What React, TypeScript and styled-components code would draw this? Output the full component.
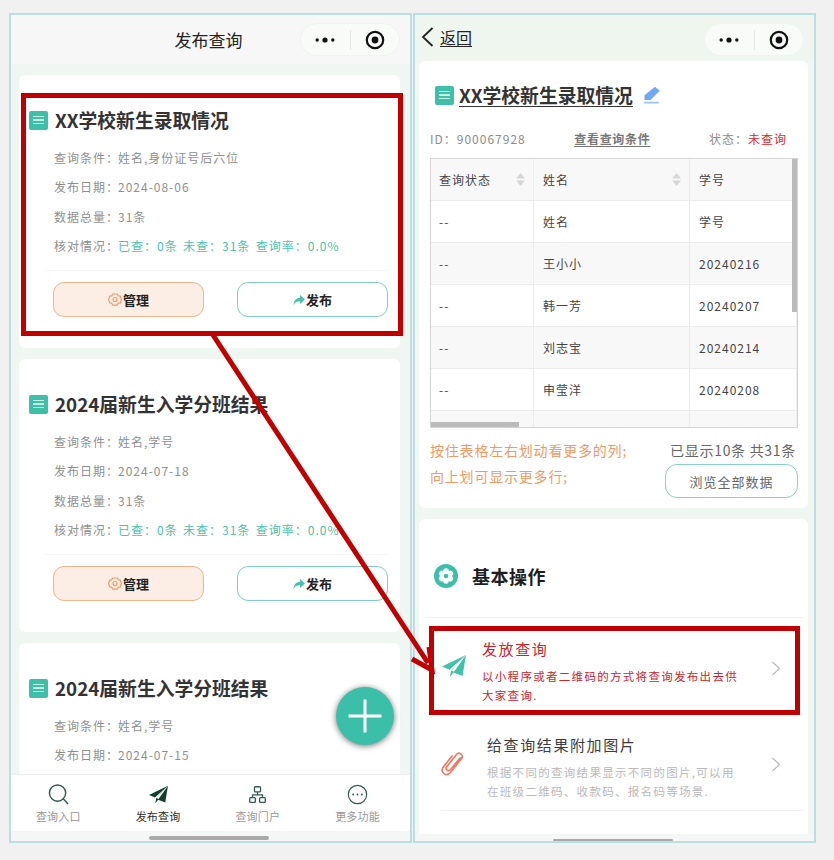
import React from "react";
import styled, { createGlobalStyle } from "styled-components";

const Global = createGlobalStyle`
  html, body { margin: 0; padding: 0; background: #f1f1f1; }
  * { box-sizing: border-box; }
  body { font-family: "Noto Sans CJK SC", "Noto Sans", sans-serif; }
`;

const Stage = styled.div`
  position: relative;
  width: 834px;
  height: 860px;
  overflow: hidden;
  display: flex;
  align-items: flex-start;
  gap: 1px;
  padding: 13px 0 0 9px;
`;

const Phone = styled.div`
  width: 403px;
  height: 830px;
  border: 2px solid #b9dfe3;
  background: #f0f6f1;
  display: flex;
  flex-direction: column;
  overflow: hidden;
`;

const NavBar = styled.div<{ $tint?: boolean }>`
  height: ${(p) => (p.$tint ? "44px" : "49px")};
  flex: none;
  display: flex;
  align-items: center;
  position: relative;
  padding: ${(p) => (p.$tint ? "0 0 0 6px" : "0")};
  background: ${(p) => (p.$tint ? "#eff6f0" : "#f6f7f6")};
`;

const NavTitle = styled.div`
  flex: 1;
  text-align: center;
  font-size: 17px;
  color: #222;
  padding-right: 4px;
`;

const Capsule = styled.div<{ $right: number; $top: number }>`
  position: absolute;
  right: ${(p) => p.$right}px;
  top: ${(p) => p.$top}px;
  width: 100px;
  height: 33px;
  border-radius: 17px;
  background: #f9fbf9;
  border: 1px solid #f1f3f1;
  display: flex;
  align-items: center;
`;

const CapsuleSide = styled.div`
  flex: 1;
  display: flex;
  align-items: center;
  justify-content: center;
`;

const CapsuleBar = styled.div`
  width: 1px;
  height: 20px;
  background: #e6e8e6;
`;

const Back = styled.a`
  display: flex;
  align-items: center;
  gap: 6px;
  font-size: 16px;
  color: #222;
  span { text-decoration: underline; text-underline-offset: 2px; }
`;

const ListBody = styled.div`
  flex: 1;
  min-height: 0;
  overflow: hidden;
  padding: 11px 10px 0 8px;
  display: flex;
  flex-direction: column;
  gap: 11px;
`;

const QueryCard = styled.div`
  flex: none;
  height: 273px;
  background: #fff;
  border-radius: 6px;
  padding: 31px 12px 0 10px;
`;

const TitleRow = styled.div`
  display: flex;
  align-items: center;
  gap: 7px;
  height: 28px;
`;

const DocBadge = styled.div`
  width: 19px;
  height: 19px;
  flex: none;
  border-radius: 2px;
  background: #3dbfa8;
  display: flex;
  flex-direction: column;
  align-items: center;
  justify-content: center;
  gap: 2px;
  i { display: block; width: 11px; height: 1.6px; background: #c8efe6; }
`;

const CardTitle = styled.div<{ $link?: boolean }>`
  font-size: 18.8px;
  line-height: 28px;
  font-weight: 700;
  color: #333;
  white-space: nowrap;
  text-decoration: ${(p) => (p.$link ? "underline" : "none")};
  text-underline-offset: 3px;
`;

const InfoList = styled.div`
  margin-top: 9px;
  padding-left: 25px;
`;

const InfoRow = styled.div`
  height: 29.3px;
  display: flex;
  align-items: center;
  font-size: 12px;
  letter-spacing: 1px;
  color: #8f8f8f;
  white-space: nowrap;
`;

const InfoLabel = styled.span`
  width: 64px;
  flex: none;
`;

const Green = styled.span`
  color: #4cc3aa;
  white-space: pre;
  word-spacing: -1px;
`;

const Rule = styled.div`
  height: 1px;
  background: #f4f5f4;
  margin: 10px 0 0 17px;
`;

const Actions = styled.div`
  display: flex;
  justify-content: space-between;
  margin-top: 11px;
  padding-left: 24px;
`;

const ActionButton = styled.div<{ $kind: "manage" | "publish" }>`
  width: 151px;
  height: 35px;
  border-radius: 11px;
  border: 1px solid ${(p) => (p.$kind === "manage" ? "#f0b48e" : "#7fd0c1")};
  background: ${(p) => (p.$kind === "manage" ? "#fdeee5" : "#fff")};
  display: flex;
  align-items: center;
  justify-content: center;
  font-size: 13px;
  font-weight: 700;
  color: #222;
  gap: 1px;
`;

const TabBar = styled.div`
  flex: none;
  height: 57px;
  background: #fff;
  border-top: 1px solid #eeeeee;
  display: grid;
  grid-template-columns: repeat(4, 1fr);
  margin-top: auto;
`;

const Tab = styled.div<{ $on?: boolean }>`
  display: flex;
  flex-direction: column;
  align-items: center;
  padding: 8px 5px 0 0;
  font-size: 11px;
  letter-spacing: 0.25px;
  line-height: 16px;
  color: ${(p) => (p.$on ? "#2b2b2b" : "#989898")};
`;

const TabIcon = styled.div`
  height: 22px;
  margin-bottom: 3px;
  display: flex;
  align-items: center;
  justify-content: center;
  svg { display: block; }
`;

const HomeStrip = styled.div<{ $h: number; $shift: number }>`
  flex: none;
  height: ${(p) => p.$h}px;
  padding-right: ${(p) => p.$shift}px;
  background: #f5f6f6;
  display: flex;
  justify-content: center;
  align-items: flex-end;
`;

const HomeBar = styled.div<{ $h: number; $mb: number }>`
  width: 120px;
  height: ${(p) => p.$h}px;
  margin-bottom: ${(p) => p.$mb}px;
  border-radius: 2px;
  background: #a9a9a9;
`;

const Fab = styled.div`
  position: absolute;
  left: 336px;
  top: 687px;
  width: 58px;
  height: 58px;
  border-radius: 50%;
  background: #3bbfa9;
  box-shadow: 0 1px 6px rgba(0, 0, 0, 0.55);
  display: flex;
  align-items: center;
  justify-content: center;
`;

const DetailBody = styled.div`
  flex: 1;
  min-height: 0;
  padding: 2px 6px 0 4px;
  display: flex;
  flex-direction: column;
  gap: 11px;
  overflow: hidden;
`;

const Panel = styled.div<{ $grow?: boolean }>`
  background: #fff;
  border-radius: 6px;
  ${(p) => (p.$grow ? "flex: 1; min-height: 0; border-radius: 6px 6px 0 0;" : "flex: none;")}
`;

const DataPanel = styled(Panel)`
  height: 447px;
  padding: 20px 10px 0 11px;
`;

const DetailTitle = styled.div`
  display: flex;
  align-items: center;
  gap: 5px;
  padding-left: 5px;
  height: 28px;
`;

const Meta = styled.div`
  display: flex;
  justify-content: space-between;
  align-items: center;
  margin-top: 19px;
  height: 20px;
  font-size: 12px;
  letter-spacing: 1px;
  color: #8c8c8c;
  padding-right: 11px;
`;

const MetaLink = styled.span`
  font-weight: 700;
  letter-spacing: 0.7px;
  color: #777;
  text-decoration: underline;
  text-underline-offset: 2px;
  margin-right: 10px;
`;

const Red = styled.span`
  color: #e02b2b;
`;

const TableBox = styled.div`
  position: relative;
  margin-top: 10px;
  height: 270px;
  width: 368px;
  border: 1px solid #d4d4d4;
  overflow: hidden;
`;

const TRow = styled.div<{ $alt?: boolean; $h?: number }>`
  display: grid;
  grid-template-columns: 103px 156px 107px;
  height: ${(p) => p.$h ?? 42}px;
  background: ${(p) => (p.$alt ? "#f8f8f8" : "#fff")};
  border-bottom: 1px solid #ececec;
`;

const TCell = styled.div`
  display: flex;
  align-items: center;
  justify-content: space-between;
  padding: 0 8px;
  font-size: 12px;
  letter-spacing: 1px;
  color: #444;
  border-right: 1px solid #ececec;
  & + & { padding-left: 9px; }
`;

const VScroll = styled.div`
  position: absolute;
  right: 0;
  top: 0;
  width: 5px;
  height: 153px;
  background: #bbbbbb;
`;

const HScroll = styled.div`
  position: absolute;
  left: 0;
  bottom: 0;
  width: 88px;
  height: 5px;
  background: #bbbbbb;
`;

const Foot = styled.div`
  display: flex;
  justify-content: space-between;
  width: 368px;
  padding-top: 9px;
`;

const Hints = styled.div`
  font-size: 14px;
  letter-spacing: 0.8px;
  line-height: 26px;
  color: #ef9a66;
`;

const FootRight = styled.div`
  display: flex;
  flex-direction: column;
  align-items: flex-end;
`;

const Count = styled.div`
  font-size: 14px;
  letter-spacing: 0.7px;
  line-height: 27px;
  color: #666;
  padding-right: 2px;
  white-space: nowrap;
`;

const BrowseBtn = styled.div`
  width: 133px;
  height: 34px;
  border: 1px solid #85d3c4;
  border-radius: 12px;
  display: flex;
  align-items: center;
  justify-content: center;
  font-size: 13px;
  letter-spacing: 1px;
  color: #666;
`;

const OpHeader = styled.div`
  height: 99px;
  display: flex;
  align-items: center;
  gap: 14px;
  padding: 15px 0 0 9px;
  margin: 0 5px 0 6px;
  border-bottom: 1px solid #f2f2f2;
  font-size: 18px;
  font-weight: 700;
  letter-spacing: 0.5px;
  color: #1e1e1e;
`;

const OpRow = styled.div<{ $pad: number; $h: number; $top: number }>`
  height: ${(p) => p.$h}px;
  margin-left: ${(p) => p.$pad}px;
  margin-right: 5px;
  padding-top: ${(p) => p.$top}px;
  border-bottom: 1px solid #f2f2f2;
  display: grid;
  grid-template-columns: auto 1fr auto;
  align-items: start;
`;

const OpIcon = styled.div<{ $w: number; $mt: number }>`
  width: ${(p) => p.$w}px;
  margin-top: ${(p) => p.$mt}px;
  svg { display: block; }
`;

const OpText = styled.div`
  min-width: 0;
`;

const OpTitle = styled.div<{ $red?: boolean }>`
  font-size: 15px;
  line-height: 20px;
  letter-spacing: 1.6px;
  color: ${(p) => (p.$red ? "#d0242a" : "#3c3c3c")};
`;

const OpDesc = styled.div<{ $red?: boolean }>`
  margin-top: 8px;
  width: 258px;
  font-size: 11.5px;
  line-height: 18.5px;
  letter-spacing: 1.3px;
  color: ${(p) => (p.$red ? "#d0242a" : "#b9b9b9")};
`;

const OpChevron = styled.div<{ $mt: number }>`
  margin-top: ${(p) => p.$mt}px;
  width: 32px;
`;

const Callout = styled.div<{ $x: number; $y: number; $w: number; $h: number }>`
  position: absolute;
  left: ${(p) => p.$x}px;
  top: ${(p) => p.$y}px;
  width: ${(p) => p.$w}px;
  height: ${(p) => p.$h}px;
  border: 5px solid #c00000;
  pointer-events: none;
`;

const ArrowLayer = styled.svg`
  position: absolute;
  left: 0;
  top: 0;
  pointer-events: none;
`;

const CapsuleContent = () => (
  <>
    <CapsuleSide>
      <svg width="20" height="8" viewBox="0 0 20 8">
        <circle cx="2.200" cy="4" r="1.700" fill="#111" />
        <circle cx="10" cy="4" r="2.600" fill="#111" />
        <circle cx="17.800" cy="4" r="1.700" fill="#111" />
      </svg>
    </CapsuleSide>
    <CapsuleBar />
    <CapsuleSide>
      <svg width="20" height="20" viewBox="0 0 20 20">
        <circle cx="10" cy="10" r="8.200" fill="none" stroke="#111" strokeWidth="2.200" />
        <circle cx="10" cy="10" r="3.400" fill="#111" />
      </svg>
    </CapsuleSide>
  </>
);

const Doc = () => (
  <DocBadge>
    <i />
    <i />
    <i />
  </DocBadge>
);

const Gear = () => (
  <svg width="14" height="15" viewBox="0 0 24 24" fill="none" stroke="#f29a63" strokeWidth="2" strokeLinejoin="round">
    <path d="M8 2.500h8l1.500 3.200 3.600.6L23 12l-1.900 5.700-3.600.6L16 21.500H8l-1.500-3.200-3.600-.6L1 12l1.900-5.700 3.600-.6z" />
    <circle cx="12" cy="12" r="3.400" />
  </svg>
);

const Share = () => (
  <svg width="12" height="12" viewBox="0 0 24 24" fill="#45c2ab">
    <path d="M14 2l10 9-10 9v-5.500C8 14.500 3.500 16.500 1 22c.5-8 5-14 13-14.500z" />
  </svg>
);

const PaperPlane = ({ fill, fold, size }: { fill: string; fold: string; size: number }) => (
  <svg width={size} height={size} viewBox="0 0 24 24">
    <path d="M24 1L0 12.500l7.500 3.300z" fill={fill} />
    <path d="M24 1L9 17l-1 6 3.500-4.500 9 3.500z" fill={fill} />
    <path d="M24 1L9.500 16.500l2.500 1.200z" fill={fold} />
  </svg>
);

const Chevron = () => (
  <svg width="10" height="15" viewBox="0 0 10 15" fill="none" stroke="#bdbdbd" strokeWidth="1.300">
    <path d="M1.500 1l7 6.500-7 6.500" />
  </svg>
);

const SortArrows = () => (
  <svg width="9" height="13" viewBox="0 0 9 13" fill="#d6d6d6">
    <path d="M4.500 0L9 5.500H0z" />
    <path d="M4.500 13L0 7.500h9z" />
  </svg>
);

const Flower = () => (
  <svg width="24" height="24" viewBox="0 0 24 24">
    <circle cx="12" cy="12" r="12" fill="#3bbfa9" />
    {[0, 60, 120, 180, 240, 300].map((a) => (
      <circle key={a} cx="12" cy="7" r="2.800" fill="#fff" transform={`rotate(${a} 12 12)`} />
    ))}
    <circle cx="12" cy="12" r="5" fill="#fff" />
    <circle cx="12" cy="12" r="2.300" fill="#3bbfa9" />
  </svg>
);

const cards = [
  { title: "XX学校新生录取情况", cond: "姓名,身份证号后六位", date: "2024-08-06", full: true },
  { title: "2024届新生入学分班结果", cond: "姓名,学号", date: "2024-07-18", full: true },
  { title: "2024届新生入学分班结果", cond: "姓名,学号", date: "2024-07-15", full: false },
];

const rows = [
  ["--", "姓名", "学号"],
  ["--", "王小小", "20240216"],
  ["--", "韩一芳", "20240207"],
  ["--", "刘志宝", "20240214"],
  ["--", "申莹洋", "20240208"],
  ["", "", ""],
];

export default function App() {
  return (
    <>
      <Global />
      <Stage>
        <Phone>
          <NavBar>
            <NavTitle>发布查询</NavTitle>
            <Capsule $right={10} $top={8}>
              <CapsuleContent />
            </Capsule>
          </NavBar>
          <ListBody>
            {cards.map((c, i) => (
              <QueryCard key={i}>
                <TitleRow>
                  <Doc />
                  <CardTitle>{c.title}</CardTitle>
                </TitleRow>
                <InfoList>
                  <InfoRow>
                    <InfoLabel>查询条件：</InfoLabel>
                    {c.cond}
                  </InfoRow>
                  <InfoRow>
                    <InfoLabel>发布日期：</InfoLabel>
                    {c.date}
                  </InfoRow>
                  {c.full && (
                    <>
                      <InfoRow>
                        <InfoLabel>数据总量：</InfoLabel>31条
                      </InfoRow>
                      <InfoRow>
                        <InfoLabel>核对情况：</InfoLabel>
                        <Green>已查：0条  未查：31条  查询率：0.0%</Green>
                      </InfoRow>
                    </>
                  )}
                </InfoList>
                {c.full && (
                  <>
                    <Rule />
                    <Actions>
                      <ActionButton $kind="manage">
                        <Gear />
                        管理
                      </ActionButton>
                      <ActionButton $kind="publish">
                        <Share />
                        发布
                      </ActionButton>
                    </Actions>
                  </>
                )}
              </QueryCard>
            ))}
          </ListBody>
          <TabBar>
            <Tab>
              <TabIcon>
                <svg width="21" height="21" viewBox="0 0 22 22" fill="none" stroke="#2f5b50" strokeWidth="1.500">
                  <circle cx="10" cy="9.500" r="8.500" />
                  <path d="M16 15.500l5 5.500" />
                </svg>
              </TabIcon>
              查询入口
            </Tab>
            <Tab $on>
              <TabIcon>
                <PaperPlane fill="#12402f" fold="#ffffff" size={19} />
              </TabIcon>
              发布查询
            </Tab>
            <Tab>
              <TabIcon>
                <svg width="19" height="19" viewBox="0 0 22 22" fill="none" stroke="#2f5b50" strokeWidth="1.500">
                  <rect x="7.500" y="2" width="7" height="6" rx="1" />
                  <rect x="2" y="14.500" width="6.500" height="5.500" rx="1" />
                  <rect x="13.500" y="14.500" width="6.500" height="5.500" rx="1" />
                  <path d="M11 8v3.500M5.200 14.500v-3h11.600v3" />
                </svg>
              </TabIcon>
              查询门户
            </Tab>
            <Tab>
              <TabIcon>
                <svg width="21" height="21" viewBox="0 0 22 22" fill="none" stroke="#2f5b50" strokeWidth="1.200">
                  <circle cx="11" cy="11" r="9.600" />
                  <circle cx="6.500" cy="11" r="1" fill="#2f5b50" stroke="none" />
                  <circle cx="11" cy="11" r="1" fill="#2f5b50" stroke="none" />
                  <circle cx="15.500" cy="11" r="1" fill="#2f5b50" stroke="none" />
                </svg>
              </TabIcon>
              更多功能
            </Tab>
          </TabBar>
          <HomeStrip $h={10} $shift={4}>
            <HomeBar $h={4} $mb={1} />
          </HomeStrip>
        </Phone>

        <Phone>
          <NavBar $tint>
            <Back>
              <svg width="13" height="20" viewBox="0 0 13 20" fill="none" stroke="#222" strokeWidth="1.800">
                <path d="M11.500 1L2 10l9.500 9" />
              </svg>
              <span>返回</span>
            </Back>
            <Capsule $right={10} $top={8}>
              <CapsuleContent />
            </Capsule>
          </NavBar>
          <DetailBody>
            <DataPanel>
              <DetailTitle>
                <Doc />
                <CardTitle $link>XX学校新生录取情况</CardTitle>
                <svg width="18" height="18" viewBox="0 0 18 18" fill="#6fa8f5" style={{ marginLeft: 5 }}>
                  <path d="M12 .8l4.700 3.900L7.500 14H1.500V9.200z" />
                  <rect x="1" y="15.700" width="15" height="1.800" rx="0.900" opacity="0.7" />
                </svg>
              </DetailTitle>
              <Meta>
                <span>ID：900067928</span>
                <MetaLink>查看查询条件</MetaLink>
                <span>
                  状态：<Red>未查询</Red>
                </span>
              </Meta>
              <TableBox>
                <TRow $alt $h={42}>
                  <TCell>
                    查询状态
                    <SortArrows />
                  </TCell>
                  <TCell>
                    姓名
                    <SortArrows />
                  </TCell>
                  <TCell>学号</TCell>
                </TRow>
                {rows.map((r, i) => (
                  <TRow key={i} $alt={i % 2 === 1}>
                    {r.map((v, j) => (
                      <TCell key={j}>{v}</TCell>
                    ))}
                  </TRow>
                ))}
                <VScroll />
                <HScroll />
              </TableBox>
              <Foot>
                <Hints>
                  按住表格左右划动看更多的列;
                  <br />
                  向上划可显示更多行;
                </Hints>
                <FootRight>
                  <Count>已显示10条 共31条</Count>
                  <BrowseBtn>浏览全部数据</BrowseBtn>
                </FootRight>
              </Foot>
            </DataPanel>
            <Panel $grow>
              <OpHeader>
                <Flower />
                基本操作
              </OpHeader>
              <OpRow $pad={23} $h={97} $top={21}>
                <OpIcon $w={40} $mt={15}>
                  <PaperPlane fill="#3fc2a9" fold="#ffffff" size={24} />
                </OpIcon>
                <OpText>
                  <OpTitle $red>发放查询</OpTitle>
                  <OpDesc $red>以小程序或者二维码的方式将查询发布出去供大家查询.</OpDesc>
                </OpText>
                <OpChevron $mt={18}>
                  <Chevron />
                </OpChevron>
              </OpRow>
              <OpRow $pad={22} $h={96} $top={20}>
                <OpIcon $w={46} $mt={14}>
                  <svg width="24" height="27" viewBox="0 0 24 27" fill="none" stroke="#ee7a68" strokeWidth="1.700" strokeLinecap="round">
                    <path d="M19 9L9.500 20.500c-2 2.300-5.500.5-4-2.500L15.500 5.500c2.500-3 7.500.5 5 4L9 24c-3.500 4-10-.5-7-5.500L11 7" />
                  </svg>
                </OpIcon>
                <OpText>
                  <OpTitle>给查询结果附加图片</OpTitle>
                  <OpDesc>根据不同的查询结果显示不同的图片,可以用在班级二维码、收款码、报名码等场景.</OpDesc>
                </OpText>
                <OpChevron $mt={18}>
                  <Chevron />
                </OpChevron>
              </OpRow>
            </Panel>
          </DetailBody>
          <HomeStrip $h={7} $shift={3}>
            <HomeBar $h={2} $mb={0} />
          </HomeStrip>
        </Phone>

        <Fab>
          <svg width="34" height="34" viewBox="0 0 34 34" fill="#fff">
            <rect x="0.500" y="15.500" width="33" height="3" />
            <rect x="15.500" y="0.500" width="3" height="33" />
          </svg>
        </Fab>
        <Callout $x={21} $y={93} $w={382} $h={243} />
        <ArrowLayer width="834" height="860" viewBox="0 0 834 860">
          <path d="M213 335L428 663" stroke="#c00000" strokeWidth="5" fill="none" />
          <path d="M412 659l20 11-3-23" stroke="#c00000" strokeWidth="5" fill="none" />
        </ArrowLayer>
        <Callout $x={429} $y={626} $w={371} $h={89} />
      </Stage>
    </>
  );
}
